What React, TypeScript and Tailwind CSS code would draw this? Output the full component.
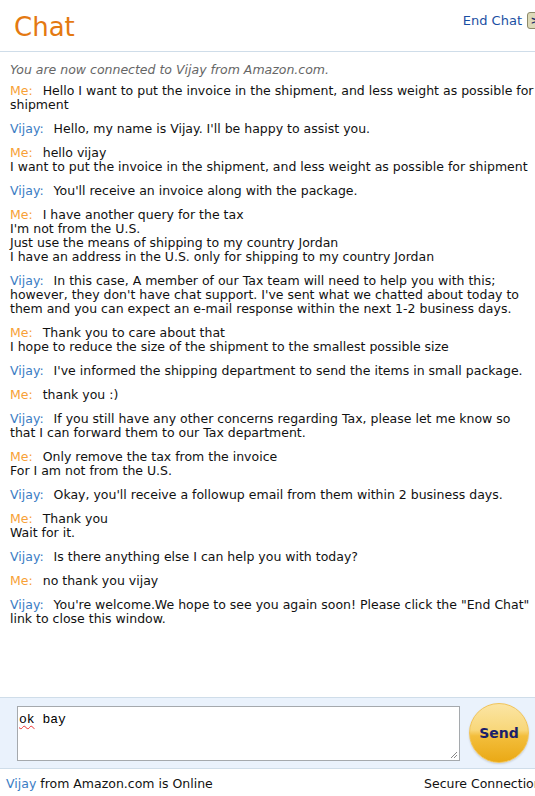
import React from 'react';

type Msg = { who: 'Me' | 'Vijay'; lines: string[] };

const messages: Msg[] = [
  { who: 'Me', lines: ['Hello I want to put the invoice in the shipment, and less weight as possible for shipment'] },
  { who: 'Vijay', lines: ["Hello, my name is Vijay. I'll be happy to assist you."] },
  { who: 'Me', lines: ['hello vijay', 'I want to put the invoice in the shipment, and less weight as possible for shipment'] },
  { who: 'Vijay', lines: ["You'll receive an invoice along with the package."] },
  {
    who: 'Me',
    lines: [
      'I have another query for the tax',
      "I'm not from the U.S.",
      'Just use the means of shipping to my country Jordan',
      'I have an address in the U.S. only for shipping to my country Jordan',
    ],
  },
  {
    who: 'Vijay',
    lines: [
      "In this case, A member of our Tax team will need to help you with this; however, they don't have chat support. I've sent what we chatted about today to them and you can expect an e-mail response within the next 1-2 business days.",
    ],
  },
  { who: 'Me', lines: ['Thank you to care about that', 'I hope to reduce the size of the shipment to the smallest possible size'] },
  { who: 'Vijay', lines: ["I've informed the shipping department to send the items in small package."] },
  { who: 'Me', lines: ['thank you :)'] },
  {
    who: 'Vijay',
    lines: ['If you still have any other concerns regarding Tax, please let me know so that I can forward them to our Tax department.'],
  },
  { who: 'Me', lines: ['Only remove the tax from the invoice', 'For I am not from the U.S.'] },
  { who: 'Vijay', lines: ["Okay, you'll receive a followup email from them within 2 business days."] },
  { who: 'Me', lines: ['Thank you', 'Wait for it.'] },
  { who: 'Vijay', lines: ['Is there anything else I can help you with today?'] },
  { who: 'Me', lines: ['no thank you vijay'] },
  {
    who: 'Vijay',
    lines: ['You\'re welcome.We hope to see you again soon! Please click the "End Chat" link to close this window.'],
  },
];

const font = { fontFamily: '"DejaVu Sans", Verdana, sans-serif' };

export default function App() {
  return (
    <div className="w-[535px] h-[796px] overflow-hidden bg-white text-[12.5px] leading-[14px] text-[#111]" style={font}>
      <div className="w-[558px]">
        {/* Header */}
        <div className="h-[52px] border-b border-[#cfdde9]">
          <div className="w-[543px] flex justify-between items-start">
            <h1 className="pl-[14px] pt-[13px] text-[26px] leading-[28px] text-[#e47911]">Chat</h1>
            <div className="flex items-center gap-[5px] pt-[12px]">
              <a className="text-[#1a4fa3] text-[13px]">End Chat</a>
              <span className="w-[16px] h-[17px] rounded-[3px] border border-[#8d8a6a] bg-[#dcd9b8] flex items-center justify-center text-[#1c2b6b] text-[11px] font-bold">
                &gt;
              </span>
            </div>
          </div>
        </div>

        {/* Transcript */}
        <div className="h-[645px] pl-[10px] pr-[20px] pt-[11px]">
          <p className="italic text-[#666] mb-[7px]">You are now connected to Vijay from Amazon.com.</p>
          <div className="flex flex-col gap-[10px]">
            {messages.map((m, i) => (
              <div key={i}>
                {m.lines.map((l, j) => (
                  <div key={j}>
                    {j === 0 && (
                      <span className={`pr-[10px] ${m.who === 'Me' ? 'text-[#f7a136]' : 'text-[#3b7dc4]'}`}>{m.who}:</span>
                    )}
                    {l}
                  </div>
                ))}
              </div>
            ))}
          </div>
        </div>

        {/* Input bar */}
        <div className="h-[72px] bg-[#eaf2fc] border-y border-[#cfdde9] flex items-center pl-[17px] gap-[9px]">
          <div className="relative w-[443px] h-[55px] bg-white border border-[#a5a9ad]">
            <span className="absolute left-[1px] top-[6px] text-[13px] text-black" style={{ fontFamily: '"Liberation Mono", monospace' }}>
              <span className="underline decoration-wavy decoration-[#e33] decoration-1 underline-offset-2">ok</span> bay
            </span>
            <svg className="absolute right-[1px] bottom-[1px]" width="9" height="9" viewBox="0 0 9 9">
              <path d="M8 2L2 8M8 5L5 8" stroke="#888" strokeWidth="1" />
            </svg>
          </div>
          <button
            className="w-[60px] h-[60px] rounded-full border border-[#f1c45a] flex items-center justify-center text-[#1b1f6a] font-bold text-[14px] shadow-[0_1px_2px_rgba(0,0,0,0.15)]"
            style={{ background: 'linear-gradient(180deg,#fbe5a4 0%,#f8d77a 45%,#f3be3c 55%,#eaa915 100%)' }}
          >
            Send
          </button>
        </div>

        {/* Footer */}
        <div className="grid grid-cols-[418px_1fr] pl-[6px] pt-[8px]">
          <span>
            <span className="text-[#3b7dc4]">Vijay</span> from Amazon.com is Online
          </span>
          <span className="whitespace-nowrap">Secure Connection</span>
        </div>
      </div>
    </div>
  );
}
